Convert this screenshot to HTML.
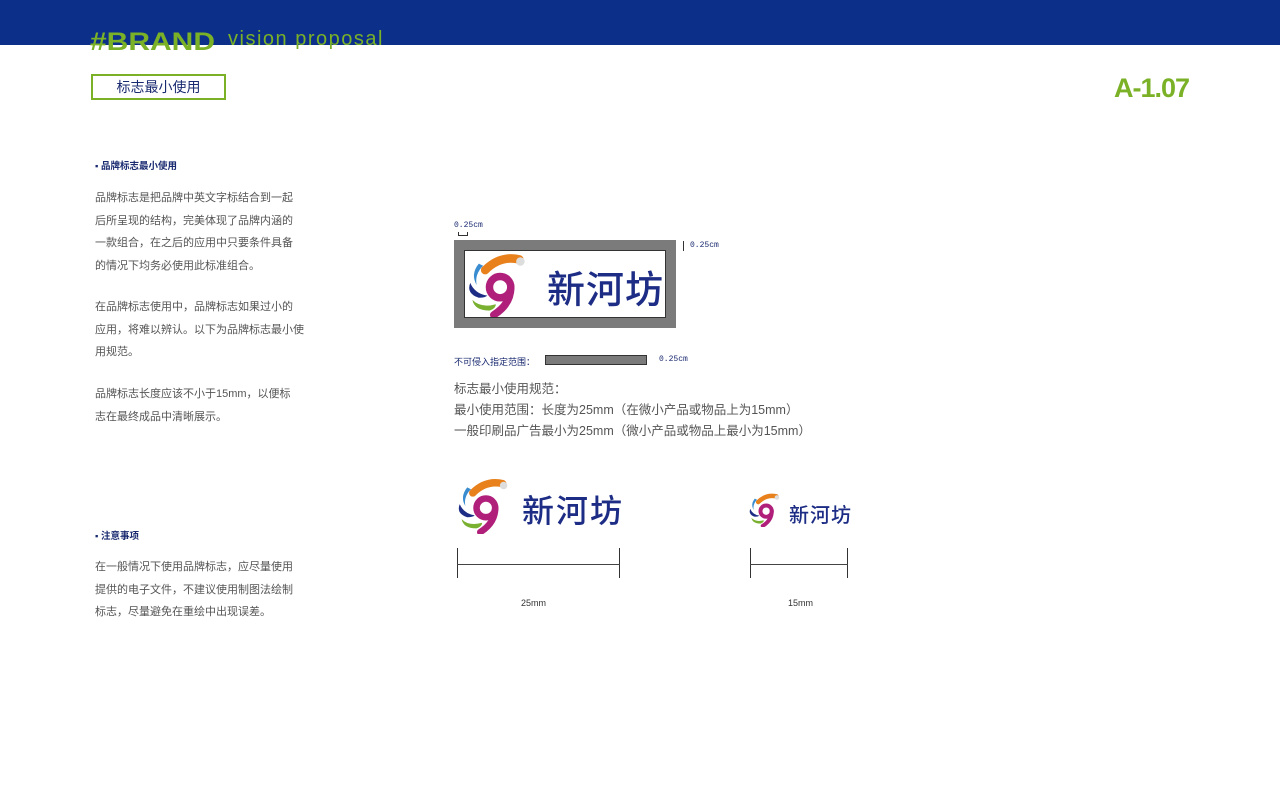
<!DOCTYPE html>
<html><head><meta charset="utf-8"><style>
body{margin:0;width:1280px;height:794px;background:#fff;position:relative;overflow:hidden;font-family:"Liberation Sans","Noto Sans CJK SC",sans-serif}
.a{position:absolute}
.p{color:#555;font-size:11px;line-height:22.5px;width:215px}
.h{color:#1a2a70;font-size:9.5px;font-weight:bold}
.logo-t{color:#1d2d85;font-family:"Noto Sans CJK SC",sans-serif;font-weight:500;letter-spacing:2px}
</style></head><body>
<svg width="0" height="0" style="position:absolute"><defs><g id="ic">
<path d="M18 16 Q32 2 50 6" stroke="#e8801c" stroke-width="8" fill="none" stroke-linecap="round"/>
<circle cx="51" cy="8" r="4" fill="#ddd"/>
<circle cx="32" cy="32" r="10" stroke="#b0207a" stroke-width="7" fill="none"/>
<path d="M42 32 Q42 48 26 58" stroke="#b0207a" stroke-width="7" fill="none" stroke-linecap="round"/>
<path d="M12 10 Q4 20 10 30 Q8 20 16 12Z" fill="#3a8cd0"/>
<path d="M4 28 Q0 38 12 42 Q18 42 20 40 Q8 38 4 28Z" fill="#1d2d85"/>
<path d="M6 44 Q8 54 22 54 Q28 52 28 48 Q14 52 6 44Z" fill="#7ab030"/>
</g></defs></svg>
<div class="a" style="left:0;top:0;width:1280px;height:45px;background:#0c2f8a"></div>
<div class="a" style="left:90px;top:27px;font-size:25px;font-weight:bold;color:#7ab127;line-height:30px;transform:scaleX(1.2);transform-origin:left">#BRAND</div>
<div class="a" style="left:228px;top:27px;font-size:20px;color:#7ab127;letter-spacing:1.5px;line-height:24px">vision proposal</div>
<div class="a" style="left:91px;top:74px;width:131px;height:22px;border:2px solid #7ab127;text-align:center;font-size:14px;line-height:22px;color:#1a2a70">标志最小使用</div>
<div class="a" style="left:1114px;top:73px;font-size:27px;font-weight:bold;color:#7ab127;letter-spacing:-1px">A-1.07</div>

<div class="a h" style="left:95px;top:158px">▪ 品牌标志最小使用</div>
<div class="a p" style="left:95px;top:187px">品牌标志是把品牌中英文字标结合到一起<br>后所呈现的结构，完美体现了品牌内涵的<br>一款组合，在之后的应用中只要条件具备<br>的情况下均务必使用此标准组合。</div>
<div class="a p" style="left:95px;top:296px">在品牌标志使用中，品牌标志如果过小的<br>应用，将难以辨认。以下为品牌标志最小使<br>用规范。</div>
<div class="a p" style="left:95px;top:383px">品牌标志长度应该不小于15mm，以便标<br>志在最终成品中清晰展示。</div>
<div class="a h" style="left:95px;top:528px">▪ 注意事项</div>
<div class="a p" style="left:95px;top:556px">在一般情况下使用品牌标志，应尽量使用<br>提供的电子文件，不建议使用制图法绘制<br>标志，尽量避免在重绘中出现误差。</div>

<div class="a" style="left:454px;top:221px;font-size:8px;color:#1a2a70;font-family:'Liberation Mono',monospace">0.25cm</div>
<div class="a" style="left:458px;top:232px;width:10px;box-sizing:border-box;height:4px;border-left:1px solid #333;border-right:1px solid #333;border-bottom:1px solid #333"></div>
<div class="a" style="left:683px;top:241px;width:1px;height:10px;background:#333"></div>
<div class="a" style="left:690px;top:241px;font-size:8px;color:#1a2a70;font-family:'Liberation Mono',monospace">0.25cm</div>
<div class="a" style="left:454px;top:240px;width:202px;height:68px;border:10px solid #7b7b7b;background:#fff;box-shadow:inset 0 0 0 1px #333"></div>
<svg class="a" style="left:466px;top:253px" width="64" height="64" viewBox="0 0 60 60"><use href="#ic"/></svg>
<div class="a logo-t" style="left:547px;top:264px;font-size:38px;line-height:46px;letter-spacing:1px">新河坊</div>

<div class="a" style="left:454px;top:355px;font-size:9px;color:#1a2a70">不可侵入指定范围：</div>
<div class="a" style="left:545px;top:355px;width:102px;height:10px;background:#7b7b7b;border:1px solid #333;box-sizing:border-box"></div>
<div class="a" style="left:659px;top:355px;font-size:8px;color:#1a2a70;font-family:'Liberation Mono',monospace">0.25cm</div>
<div class="a" style="left:454px;top:379px;font-size:12.5px;line-height:21px;color:#555">标志最小使用规范：<br>最小使用范围：长度为25mm（在微小产品或物品上为15mm）<br>一般印刷品广告最小为25mm（微小产品或物品上最小为15mm）</div>

<svg class="a" style="left:456px;top:478px" width="56" height="56" viewBox="0 0 60 60"><use href="#ic"/></svg>
<div class="a logo-t" style="left:522px;top:489px;font-size:32px;line-height:40px">新河坊</div>
<div class="a" style="left:457px;top:548px;width:1px;height:30px;background:#333"></div>
<div class="a" style="left:619px;top:548px;width:1px;height:30px;background:#333"></div>
<div class="a" style="left:457px;top:564px;width:163px;height:1px;background:#444"></div>
<div class="a" style="left:521px;top:598px;font-size:9px;color:#333">25mm</div>

<svg class="a" style="left:748px;top:493px" width="34" height="34" viewBox="0 0 60 60"><use href="#ic"/></svg>
<div class="a logo-t" style="left:789px;top:500px;font-size:20px;line-height:28px;letter-spacing:1px">新河坊</div>
<div class="a" style="left:750px;top:548px;width:1px;height:30px;background:#333"></div>
<div class="a" style="left:847px;top:548px;width:1px;height:30px;background:#333"></div>
<div class="a" style="left:750px;top:564px;width:98px;height:1px;background:#444"></div>
<div class="a" style="left:788px;top:598px;font-size:9px;color:#333">15mm</div>
</body></html>
